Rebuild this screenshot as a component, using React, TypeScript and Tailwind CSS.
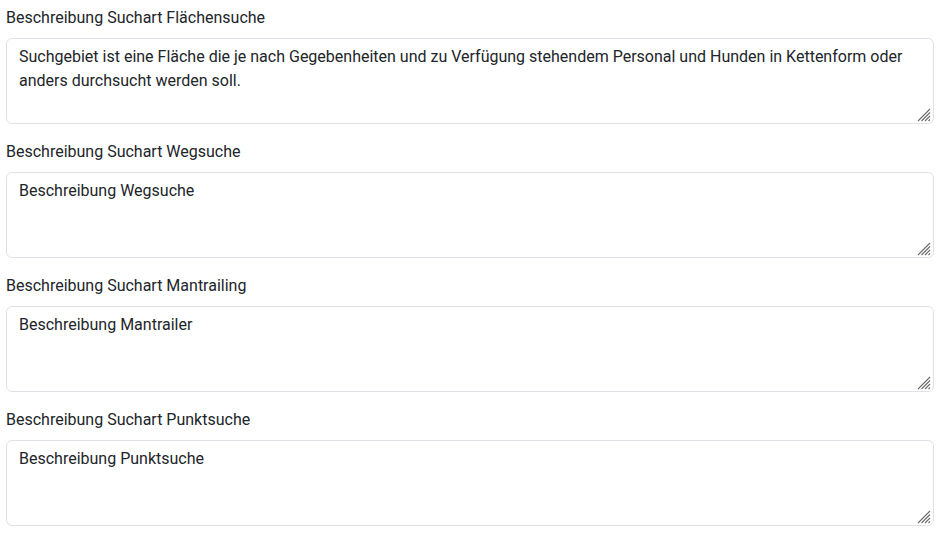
import React from "react";

const items = [
  {
    label: "Beschreibung Suchart Flächensuche",
    value:
      "Suchgebiet ist eine Fläche die je nach Gegebenheiten und zu Verfügung stehendem Personal und Hunden in Kettenform oder anders durchsucht werden soll.",
  },
  { label: "Beschreibung Suchart Wegsuche", value: "Beschreibung Wegsuche" },
  { label: "Beschreibung Suchart Mantrailing", value: "Beschreibung Mantrailer" },
  { label: "Beschreibung Suchart Punktsuche", value: "Beschreibung Punktsuche" },
];

function Grip() {
  return (
    <svg
      width="14"
      height="14"
      viewBox="0 0 14 14"
      className="absolute right-[3px] bottom-[2px] pointer-events-none"
    >
      <g stroke="#6b6b6b" strokeWidth="1.1">
        <line x1="13" y1="1" x2="1" y2="13" />
        <line x1="13" y1="4.5" x2="4.5" y2="13" />
        <line x1="13" y1="8" x2="8" y2="13" />
        <line x1="13" y1="11.5" x2="11.5" y2="13" />
      </g>
    </svg>
  );
}

export default function App() {
  return (
    <div
      className="bg-white pl-[6px] pt-[6px] w-[934px] text-[#212529]"
      style={{ fontFamily: "Roboto, 'Noto Sans', sans-serif" }}
    >
      {items.map((it) => (
        <div key={it.label} className="mb-4">
          <label className="block text-[16px] leading-6 mb-2">{it.label}</label>
          <div className="relative">
            <textarea
              rows={3}
              defaultValue={it.value}
              className="block w-full h-[86px] resize-none border border-[#dee2e6] rounded-[6px] px-3 py-[6px] text-[16px] leading-6 text-[#212529] bg-white outline-none"
              style={{ fontFamily: "Roboto, 'Noto Sans', sans-serif" }}
            />
            <Grip />
          </div>
        </div>
      ))}
    </div>
  );
}
